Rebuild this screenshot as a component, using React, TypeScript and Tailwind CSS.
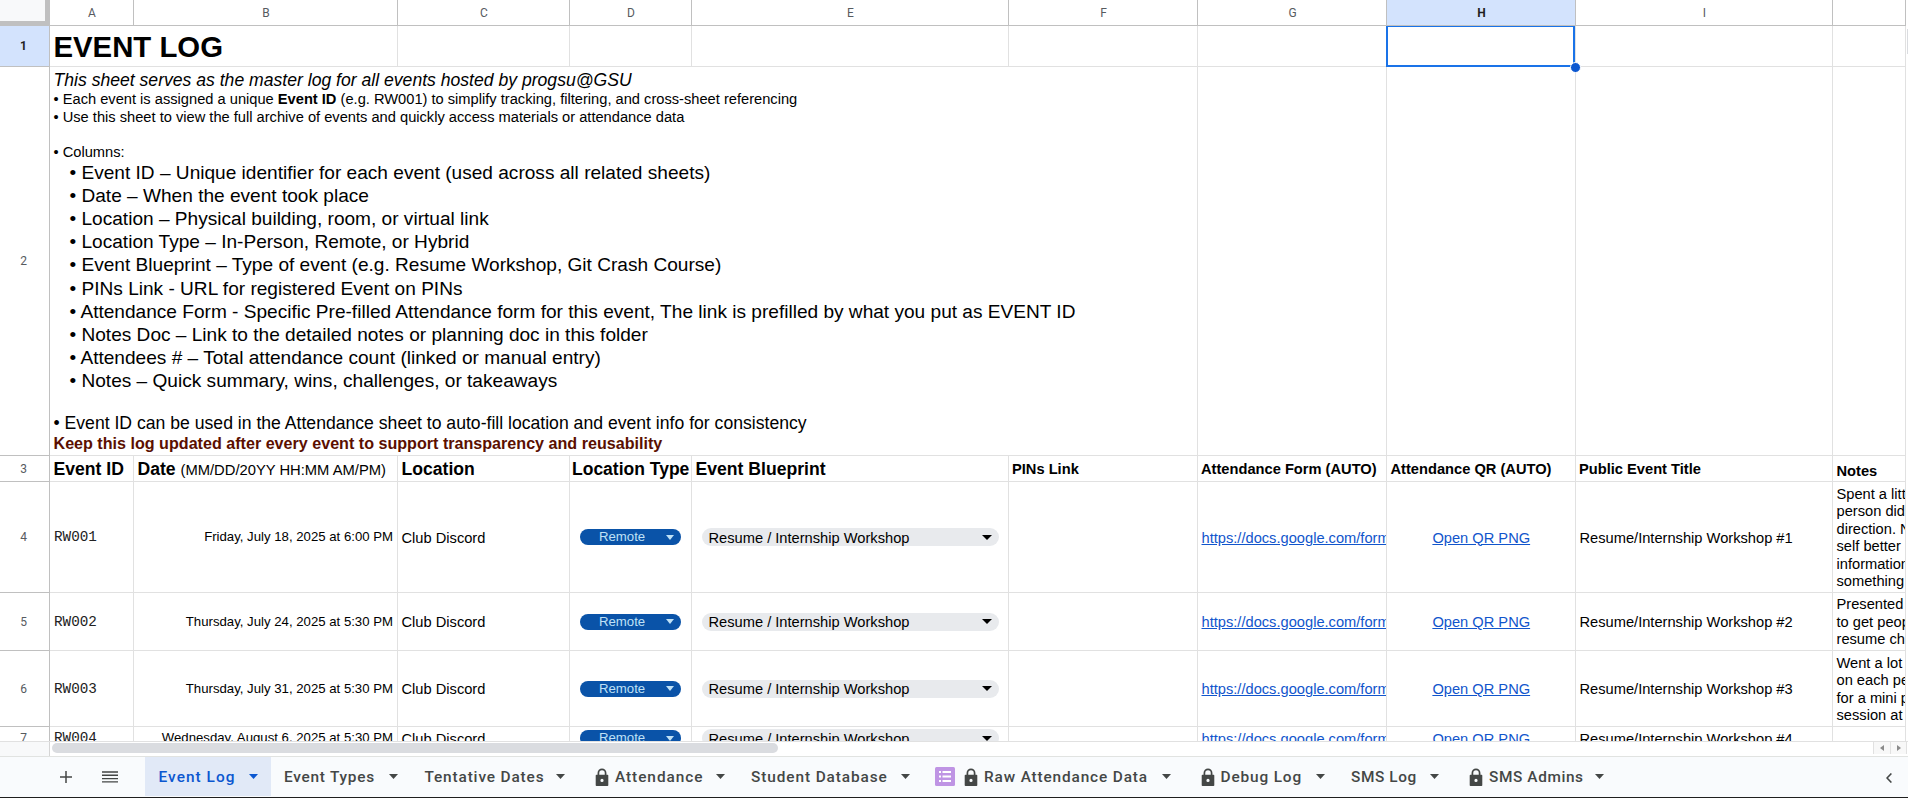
import React from "react";

const grid = "grid grid-cols-[50px_84px_264px_172px_122px_317px_189px_189px_189px_257px_73px] w-[1906px]";
const cell = "border-r border-b border-[#e1e1e1] overflow-hidden whitespace-nowrap";
const body = cell + " flex items-center pl-[3.5px] pt-[1px] text-[14.67px]";
const bold = cell + " flex items-center font-bold";

function RowNumber({ n, active }: { n: number; active?: boolean }) {
  return (
    <div
      className={
        "flex items-center justify-center border-r border-b border-[#c0c0c0] pr-[2px] font-[Roboto,sans-serif] text-[12px] " +
        (active ? "bg-[#d3e3fd] font-bold text-[#1f1f1f]" : "text-[#575b5f]")
      }
    >
      {n}
    </div>
  );
}

function Caret({ className }: { className: string }) {
  return (
    <svg viewBox="0 0 10 5" preserveAspectRatio="none" className={"h-[5px] shrink-0 " + className} fill="currentColor">
      <path d="M0 0h10L5 5z" />
    </svg>
  );
}

function Lock() {
  return (
    <svg viewBox="0 0 14 18" className="h-[18px] w-[14px] shrink-0 text-[#444746]">
      <path d="M3.4 8V4.9a3.6 3.6 0 0 1 7.2 0V8" fill="none" stroke="currentColor" strokeWidth="1.7" />
      <path fillRule="evenodd" fill="currentColor" d="M1.5 6.8h11c.5 0 .8.3.8.8V17.200c0 .5-.3.8-.8.8h-11c-.5 0-.8-.3-.8-.8V7.600c0-.5.3-.8.8-.8zM7 10.800a1.600 1.600 0 1 0 0 3.200 1.600 1.600 0 0 0 0-3.200z" />
    </svg>
  );
}

function FormIcon() {
  return (
    <svg viewBox="0 0 20 19" className="mr-[9px] h-[19px] w-[20px] shrink-0">
      <rect width="20" height="19" rx="1.5" fill="#bf94e4" />
      <path d="M4 4h2v2H4zM7.500 4H16v2H7.500zM4 8.500h2v2H4zM7.500 8.500H16v2H7.500zM4 13h2v2H4zM7.500 13H16v2H7.500z" fill="#fff" />
    </svg>
  );
}

const letters = ["A", "B", "C", "D", "E", "F", "G", "H", "I", ""];

const bullets = [
  "Event ID – Unique identifier for each event (used across all related sheets)",
  "Date – When the event took place",
  "Location – Physical building, room, or virtual link",
  "Location Type – In-Person, Remote, or Hybrid",
  "Event Blueprint – Type of event (e.g. Resume Workshop, Git Crash Course)",
  "PINs Link - URL for registered Event on PINs",
  "Attendance Form - Specific Pre-filled Attendance form for this event, The link is prefilled by what you put as EVENT ID",
  "Notes Doc – Link to the detailed notes or planning doc in this folder",
  "Attendees # – Total attendance count (linked or manual entry)",
  "Notes – Quick summary, wins, challenges, or takeaways",
];

const rows = [
  { n: 4, h: "h-[111px]", id: "RW001", date: "Friday, July 18, 2025 at 6:00 PM", notes: ["Spent a little", "person did", "direction. Not", "self better", "information", "something"] },
  { n: 5, h: "h-[58px]", id: "RW002", date: "Thursday, July 24, 2025 at 5:30 PM", notes: ["Presented", "to get people", "resume check"] },
  { n: 6, h: "h-[76px]", id: "RW003", date: "Thursday, July 31, 2025 at 5:30 PM", notes: ["Went a lot", "on each person", "for a mini project", "session at"] },
  { n: 7, h: "h-[23px]", id: "RW004", date: "Wednesday, August 6, 2025 at 5:30 PM", notes: [] },
];

const tabs = [
  { name: "Event Log", w: "w-[126px]", pl: "pl-[13.5px]", gap: "tracking-[1.05px]", active: true },
  { name: "Event Types", w: "w-[140px]", pl: "pl-[13px]", gap: "tracking-[0.75px]" },
  { name: "Tentative Dates", w: "w-[167px]", pl: "pl-[13.5px]", gap: "tracking-[0.85px]" },
  { name: "Attendance", w: "w-[160px]", pl: "pl-[17px]", gap: "tracking-[0.95px]", lock: true },
  { name: "Student Database", w: "w-[185px]", pl: "pl-[13px]", gap: "tracking-[0.9px]" },
  { name: "Raw Attendance Data", w: "w-[261px]", pl: "pl-[12px]", gap: "tracking-[0.85px]", lock: true, form: true },
  { name: "Debug Log", w: "w-[154px]", pl: "pl-[16.5px]", gap: "tracking-[0.85px]", lock: true },
  { name: "SMS Log", w: "w-[114px]", pl: "pl-[13px]", gap: "tracking-[0.6px]" },
  { name: "SMS Admins", w: "w-[165px]", pl: "pl-[17px]", gap: "tracking-[0.6px]", lock: true },
];

export default function App() {
  return (
    <div className="flex h-[798px] w-[1908px] flex-col overflow-hidden bg-white font-['Liberation_Sans',Arial,sans-serif] text-black">
      <div className="flex h-[741px] shrink-0 overflow-hidden">
        <div className="flex w-[1906px] shrink-0 flex-col">
          <div className={grid + " h-[26px] shrink-0"}>
            <div className="border-r-[5px] border-b-[5px] border-[#c0c0c0] bg-[#f8f9fa]" />
            {letters.map((l, i) => (
              <div
                key={i}
                className={
                  "flex items-center justify-center border-r border-b border-[#c0c0c0] pl-px font-[Roboto,sans-serif] text-[12px] " +
                  (l === "H" ? "bg-[#d3e3fd] font-bold text-[#1f1f1f]" : "text-[#575b5f]")
                }
              >
                {l}
              </div>
            ))}
          </div>

          <div className={grid + " h-[41px] shrink-0"}>
            <RowNumber n={1} active />
            <div className={cell + " col-span-2 flex items-center pt-[1px] pl-[3.5px] text-[29.33px] font-bold"}>EVENT LOG</div>
            <div className={cell} />
            <div className={cell} />
            <div className={cell} />
            <div className={cell} />
            <div className={cell} />
            <div className="relative border-r border-b border-[#e1e1e1]">
              <div className="absolute top-0 right-0 -bottom-px -left-px border-2 border-t border-[#1a73e8]" />
              <div className="absolute -right-[6px] -bottom-[7px] size-[11px] rounded-full border border-white bg-[#0b57d0]" />
            </div>
            <div className={cell} />
            <div className={cell} />
          </div>

          <div className={grid + " h-[389px] shrink-0"}>
            <RowNumber n={2} />
            <div className={cell + " col-span-6 pl-[3.5px] text-[14.67px] leading-[17.5px]"}>
              <div className="h-[24px] pt-px text-[17.6px] leading-[24px] italic">
                This sheet serves as the master log for all events hosted by progsu@GSU
              </div>
              <div>
                • Each event is assigned a unique <b>Event ID</b> (e.g. RW001) to simplify tracking, filtering, and cross-sheet referencing
              </div>
              <div>• Use this sheet to view the full archive of events and quickly access materials or attendance data</div>
              <div className="mt-[17.5px]">• Columns:</div>
              <div className="pl-[16px] text-[19.09px] leading-[23.11px]">
                {bullets.map((b) => (
                  <div key={b}>• {b}</div>
                ))}
              </div>
              <div className="mt-[20.5px] text-[17.62px] leading-[21px]">
                • Event ID can be used in the Attendance sheet to auto-fill location and event info for consistency
              </div>
              <div className="text-[16.13px] leading-[19.5px] font-bold text-[#5b0f00]">
                Keep this log updated after every event to support transparency and reusability
              </div>
            </div>
            <div className={cell} />
            <div className={cell} />
            <div className={cell} />
            <div className={cell} />
          </div>

          <div className={grid + " h-[26px] shrink-0"}>
            <RowNumber n={3} />
            <div className={bold + " pt-px pl-[3.5px] text-[17.6px]"}>Event ID</div>
            <div className={bold + " pt-px pl-[3.5px] text-[17.6px]"}>
              <span>Date <span className="text-[14.75px] font-normal">(MM/DD/20YY HH:MM AM/PM)</span></span>
            </div>
            <div className={bold + " pt-px pl-[3.5px] text-[17.6px]"}>Location</div>
            <div className={bold + " pt-px pl-[2px] text-[17.5px]"}>Location Type</div>
            <div className={bold + " pt-px pl-[3.5px] text-[17.6px]"}>Event Blueprint</div>
            <div className={bold + " pl-[3px] text-[14.67px]"}>PINs Link</div>
            <div className={bold + " pl-[3px] text-[14.67px]"}>Attendance Form (AUTO)</div>
            <div className={bold + " pl-[3.5px] text-[14.67px]"}>Attendance QR (AUTO)</div>
            <div className={bold + " pl-[3px] text-[14.67px]"}>Public Event Title</div>
            <div className={bold + " pt-[4px] pl-[3.5px] text-[14.67px]"}>Notes</div>
          </div>

          {rows.map((r) => (
            <div key={r.n} className={grid + " shrink-0 " + r.h}>
              <RowNumber n={r.n} />
              <div className={cell + " flex items-center pt-[2px] pl-[4px] font-['Liberation_Mono',monospace] text-[14.3px] text-[#222]"}>{r.id}</div>
              <div className={cell + " flex items-center justify-end pr-[4px] text-[13.2px]"}>{r.date}</div>
              <div className={body}>Club Discord</div>
              <div className={cell + " flex items-center pl-[10px]"}>
                <div className="flex h-[16px] w-[101px] items-center justify-between rounded-full bg-[#0a53a8] pr-[7px] pl-[19px] text-[13.2px] leading-[16px] text-[#bfe1f6]">
                  Remote
                  <Caret className="w-[8px]" />
                </div>
              </div>
              <div className={cell + " flex items-center pl-[10px]"}>
                <div className="flex h-[18px] w-[297px] items-center justify-between rounded-full bg-[#e8eaed] pr-[7px] pl-[6.5px] text-[14.67px] leading-[18px]">
                  <span className="pt-[1px]">Resume / Internship Workshop</span>
                  <Caret className="w-[10px]" />
                </div>
              </div>
              <div className={cell} />
              <div className={body + " text-[#1155cc] underline"}>https://docs.google.com/forms</div>
              <div className={body + " justify-center pr-[3px] text-[#1155cc] underline"}>Open QR PNG</div>
              <div className={body}>Resume/Internship Workshop #{r.n - 3}</div>
              <div className={cell + " flex flex-col justify-end pb-[1.5px] pl-[3.5px] text-[14.67px] leading-[17.5px]"}>
                {r.notes.map((t) => (
                  <div key={t}>{t}</div>
                ))}
              </div>
            </div>
          ))}
        </div>
        <div className="flex flex-1 flex-col items-end border-t-[26px] border-t-white pt-[3px]">
          <div className="h-[25px] w-px bg-[#dadce0]" />
        </div>
      </div>

      <div className="flex h-[15px] shrink-0 border-t border-[#e1e1e1]">
        <div className="w-[50px] border-r border-[#d5d5d5] bg-[#f8f9fa]" />
        <div className="flex flex-1 pt-px pl-[2px]">
          <div className="h-[10px] w-[726px] rounded-full bg-[#dadce0]" />
        </div>
        <div className="flex h-[12px] w-[35px] text-[#8a8a8a]">
          <div className="flex w-[17px] items-center justify-center border-l border-[#e1e1e1] bg-[#f8f8f8]">
            <svg viewBox="0 0 4 6" className="h-[6px] w-[4px]" fill="currentColor"><path d="M4 0v6L0 3z" /></svg>
          </div>
          <div className="flex w-[17px] items-center justify-center border-x border-[#e1e1e1] bg-[#f8f8f8]">
            <svg viewBox="0 0 4 6" className="h-[6px] w-[4px]" fill="currentColor"><path d="M0 0v6l4-3z" /></svg>
          </div>
        </div>
      </div>

      <div className="flex h-[42px] shrink-0 border-t border-b border-t-[#e1e3e1] border-b-[#1f1f1f] bg-[#f9fbfd] pb-px">
        <div className="flex w-[145px] shrink-0 items-center text-[#444746]">
          <svg viewBox="0 0 12 12" className="ml-[60px] h-[12px] w-[12px]" stroke="currentColor" strokeWidth="1.5">
            <path d="M6 0v12M0 6h12" />
          </svg>
          <svg viewBox="0 0 16 12" className="ml-[30px] h-[12px] w-[16px]" stroke="currentColor" strokeWidth="1.4">
            <path d="M0 1h16M0 4.300h16M0 7.600h16M0 10.900h16" />
          </svg>
        </div>
        {tabs.map((t) => (
          <div
            key={t.name}
            className={
              "flex shrink-0 items-center font-[Roboto,sans-serif] text-[15.4px] font-medium whitespace-nowrap " +
              t.w + " " + t.pl + " " + t.gap + (t.active ? " bg-[#e1e9f7] text-[#0b57d0]" : " text-[#444746]")
            }
          >
            {t.form && <FormIcon />}
            {t.lock && <Lock />}
            <span className={t.lock ? "pt-[2px] pl-[6px]" : "pt-[2px]"}>{t.name}</span>
            <Caret className="mr-[13.5px] ml-auto w-[9px]" />
          </div>
        ))}
        <div className="flex flex-1 items-center justify-end pt-[3px] pr-[16px] text-[#444746]">
          <svg viewBox="0 0 6 10" className="h-[10px] w-[6px]" fill="none" stroke="currentColor" strokeWidth="1.6"><path d="M5.400 .5L1 5l4.400 4.500" /></svg>
        </div>
      </div>
    </div>
  );
}
